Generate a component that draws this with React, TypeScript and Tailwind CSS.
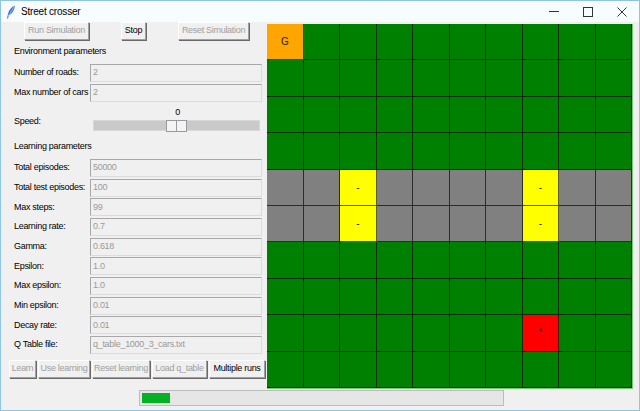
import React from "react";

const envParams = [
  ["Number of roads:", "2"],
  ["Max number of cars", "2"],
];

const learnParams = [
  ["Total episodes:", "50000"],
  ["Total test episodes:", "100"],
  ["Max steps:", "99"],
  ["Learning rate:", "0.7"],
  ["Gamma:", "0.618"],
  ["Epsilon:", "1.0"],
  ["Max epsilon:", "1.0"],
  ["Min epsilon:", "0.01"],
  ["Decay rate:", "0.01"],
  ["Q Table file:", "q_table_1000_3_cars.txt"],
];

const bottomButtons = [
  { label: "Learn", w: "w-[27px]", on: false },
  { label: "Use learning", w: "w-[52px]", on: false },
  { label: "Reset learning", w: "w-[58px]", on: false },
  { label: "Load q_table", w: "w-[55px]", on: false },
  { label: "Multiple runs", w: "w-[56px]", on: true },
];

const TkButton = ({ label, on, className }: { label: string; on: boolean; className: string }) => (
  <div
    className={`h-[18px] flex items-center justify-center bg-[#f0f0f0] border border-t-white border-l-white border-r-[#a0a0a0] border-b-[#a0a0a0] shadow-[1px_1px_0_#696969] whitespace-nowrap ${
      on ? "text-black" : "text-[#a0a0a0]"
    } ${className}`}
  >
    {label}
  </div>
);

const Entry = ({ value }: { value: string }) => (
  <div className="w-[172px] h-[18px] bg-[#f0f0f0] border border-[#dcdcdc] border-t-[#a8a8a8] border-l-[#a8a8a8] pl-[2px] flex items-center text-[#9a9a9a]">
    {value}
  </div>
);

const Row = ({ label, value }: { label: string; value: string }) => (
  <div className="flex items-center h-[18px]">
    <div className="w-[76px] whitespace-nowrap">{label}</div>
    <Entry value={value} />
  </div>
);

// cell type per (row, col)
const cellOf = (r: number, c: number) => {
  if (r === 0 && c === 0) return { bg: "bg-[#ffa500]", text: "G" };
  if (r === 8 && c === 7) return { bg: "bg-[#ff0000]", text: "*" };
  if (r === 4 || r === 5) {
    if (c === 2 || c === 7) return { bg: "bg-[#ffff00]", text: "-" };
    return { bg: "bg-[#808080]", text: "" };
  }
  return { bg: "bg-[#008000]", text: "" };
};

const Feather = () => (
  <svg width="10" height="14" viewBox="0 0 10 14">
    <path d="M9 0.5 C5 2 2.5 5.5 1.8 10 L1 13.5 L2 13.6 L2.8 10.5 C6 9 8.5 5 9 0.5 Z" fill="#3c6fd0" />
    <path d="M8.5 1.2 L2.4 11" stroke="#c8dcff" strokeWidth="0.7" />
  </svg>
);

export default function App() {
  const cells = [];
  for (let r = 0; r < 10; r++) {
    for (let c = 0; c < 10; c++) {
      const cell = cellOf(r, c);
      cells.push(
        <div
          key={`${r}-${c}`}
          className={`${cell.bg} border-r border-b border-black/65 flex items-center justify-center text-[10px] text-[#2a1a00]`}
        >
          {cell.text}
        </div>
      );
    }
  }

  return (
    <div className="w-[640px] h-[411px] overflow-hidden bg-[#f0f0f0] border border-[#8fc5e0] font-['Liberation_Sans',Arial,sans-serif] text-[9px] tracking-[-0.3px] text-black flex flex-col">
      {/* title bar */}
      <div className="h-[21px] bg-[#f7fcfe] flex items-center shrink-0">
        <div className="ml-[5px] mt-[1px]">
          <Feather />
        </div>
        <div className="ml-[5px] text-[10px] tracking-[-0.2px]">Street crosser</div>
        <div className="ml-auto flex items-center h-full">
          <div className="w-[34px] flex justify-center">
            <div className="w-[10px] h-px bg-[#333]" />
          </div>
          <div className="w-[34px] flex justify-center">
            <div className="w-[10px] h-[10px] border border-[#333]" />
          </div>
          <div className="w-[34px] flex justify-center">
            <svg width="10" height="10" viewBox="0 0 10 10">
              <path d="M0.5 0.5 L9.5 9.5 M9.5 0.5 L0.5 9.5" stroke="#333" strokeWidth="1" />
            </svg>
          </div>
        </div>
      </div>

      <div className="flex h-[367px] shrink-0">
        {/* left panel */}
        <div className="w-[266px] flex flex-col">
          <div className="flex ml-[23px] gap-[32px]">
            <TkButton label="Run Simulation" on={false} className="w-[65px]" />
            <TkButton label="Stop" on={true} className="w-[25px]" />
            <TkButton label="Reset Simulation" on={false} className="w-[71px]" />
          </div>

          <div className="ml-[13px] mt-[5px] h-[14px] flex items-center">Environment parameters</div>
          <div className="ml-[13px] mt-[5px] flex flex-col gap-[2px]">
            {envParams.map(([l, v]) => (
              <Row key={l} label={l} value={v} />
            ))}
          </div>

          <div className="ml-[13px] mt-[4px] flex h-[28px]">
            <div className="w-[79px] flex items-center pt-[4px]">Speed:</div>
            <div className="w-[167px] flex flex-col items-center">
              <div className="h-[14px] flex items-center pl-[2px]">0</div>
              <div className="w-full h-[11px] bg-[#c9c9c9] border border-[#d8d8d8] relative">
                <div className="absolute left-[72px] -top-[1px] w-[21px] h-[12px] flex bg-[#f4f4f4] border border-[#9a9a9a]">
                  <div className="w-1/2 h-full border-r border-[#9a9a9a]" />
                </div>
              </div>
            </div>
          </div>

          <div className="ml-[13px] mt-[6px] h-[14px] flex items-center">Learning parameters</div>
          <div className="ml-[13px] mt-[5px] flex flex-col gap-[1.67px]">
            {learnParams.map(([l, v]) => (
              <Row key={l} label={l} value={v} />
            ))}
          </div>

          <div className="flex ml-[8px] mt-[6px] gap-[2px]">
            {bottomButtons.map((b) => (
              <TkButton key={b.label} label={b.label} on={b.on} className={b.w} />
            ))}
          </div>
        </div>

        {/* board */}
        <div className="pt-[2px]">
          <div className="w-[366px] h-[365px] grid grid-cols-10 grid-rows-10 border-r border-b border-[#79c879]">
            {cells}
          </div>
        </div>
      </div>

      <div className="ml-[138px] mt-[1px] w-[365px] h-[16px] bg-[#e6e6e6] border border-[#bcbcbc] p-[2px]">
        <div className="w-[28px] h-full bg-[#06b025]" />
      </div>
    </div>
  );
}
